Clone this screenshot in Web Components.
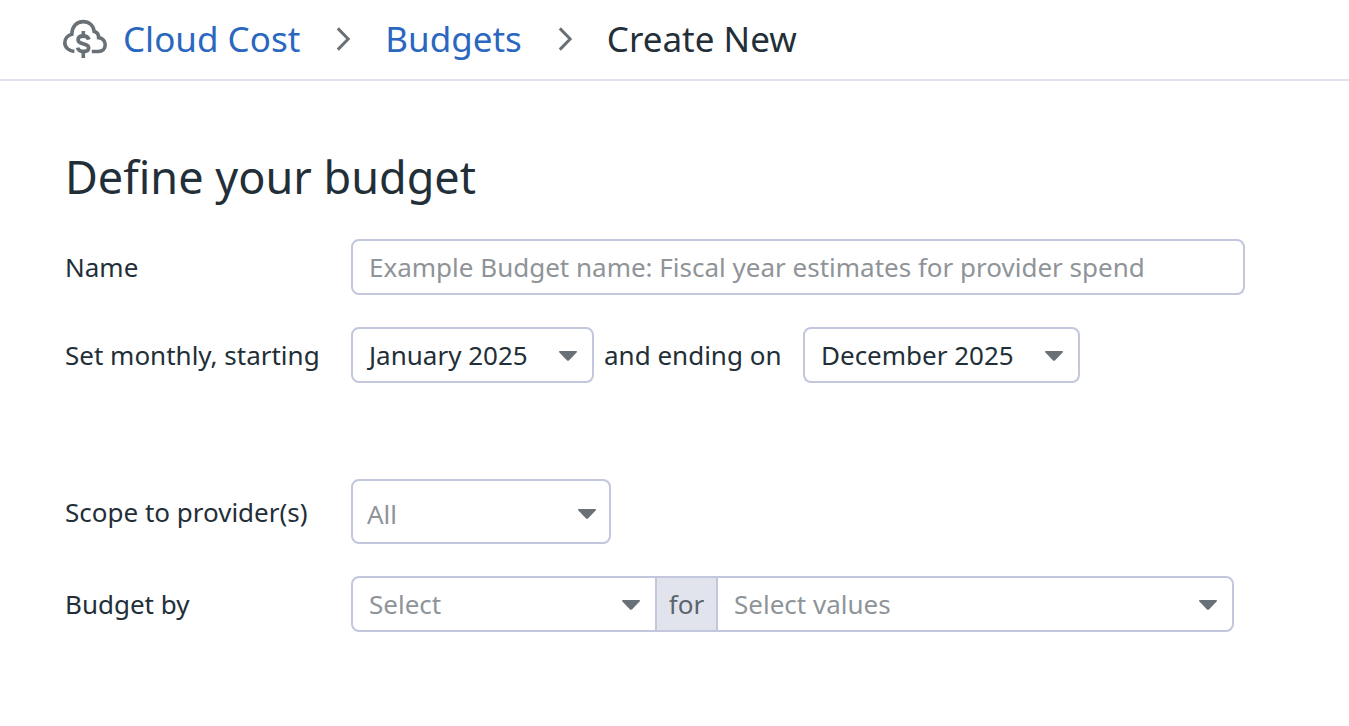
<!DOCTYPE html>
<html lang="en">
<head>
<meta charset="utf-8">
<meta name="viewport" content="width=device-width, initial-scale=1">
<title>Create New Budget</title>
<style>
  body {
    margin: 0;
    background: #fff;
    color: #232f38;
    font: 26px/36px "Noto Sans", "Open Sans", sans-serif;
  }
</style>
</head>
<body>
<budget-page></budget-page>

<script>
  const define = (name, html, setup) => {
    const template = document.createElement('template');
    template.innerHTML = html;
    customElements.define(name, class extends HTMLElement {
      constructor() {
        super();
        this.attachShadow({ mode: 'open' }).append(template.content.cloneNode(true));
      }
      connectedCallback() {
        if (setup) setup(this, this.shadowRoot);
      }
    });
  };

  define('cloud-cost-icon', `
    <style>
      :host { display: block; width: 44px; height: 40px; }
      svg { display: block; }
    </style>
    <svg width="44" height="40" viewBox="0 0 44 40" fill="none" stroke="#697177" stroke-width="3.6" aria-hidden="true">
      <path d="M11.4 32.5C6 32 1.8 28.6 1.8 23.8C1.8 19.6 4.6 16.2 8.8 15.2C9 7.6 13.6 2.6 20.2 2.6C26 2.6 30.6 6.4 31.2 12.6C34 13.2 35.6 15.2 35.6 18.6C39.6 19.2 42.2 22 42.2 25.8C42.2 29.8 39.4 32.5 35.4 32.5H28.8"/>
      <path d="M20.3 12V17.4M20.3 31.5V39"/>
      <path stroke-width="3.8" d="M25.9 20.6C25.1 18.2 23.1 17 20.3 17C17.1 17 15.1 18.5 15.1 20.8C15.1 23.2 17 24.1 20.4 24.8C23.8 25.5 25.6 26.4 25.6 28.9C25.6 31.2 23.6 32.4 20.5 32.4C17.3 32.4 15.2 31 14.6 28.6"/>
    </svg>`);

  define('crumb-chevron', `
    <style>
      :host { display: block; width: 14px; height: 24px; }
      svg { display: block; }
    </style>
    <svg width="14" height="24" viewBox="0 0 14 24" fill="none" stroke="#697177" stroke-width="3" aria-hidden="true">
      <path d="M1.8 1.4L12.2 12L1.8 22.6"/>
    </svg>`);

  define('crumb-bar', `
    <style>
      :host { display: block; border-bottom: 2px solid #e1e3ec; }
      nav {
        display: flex;
        align-items: center;
        padding: 15px 63px 16px;
        font-size: 35px;
        line-height: 48px;
      }
      cloud-cost-icon { margin-right: 16px; }
      crumb-chevron { margin: 0 35px 0 36px; }
      a { color: #2b67bf; text-decoration: none; }
    </style>
    <nav aria-label="Breadcrumb">
      <cloud-cost-icon></cloud-cost-icon>
      <a href="#cloud-cost">Cloud Cost</a>
      <crumb-chevron></crumb-chevron>
      <a href="#budgets">Budgets</a>
      <crumb-chevron></crumb-chevron>
      <span aria-current="page">Create New</span>
    </nav>`);

  define('text-field', `
    <style>
      :host { display: flex; align-items: center; }
      label { flex: none; width: var(--label-width); }
      input {
        flex: 1;
        min-width: 0;
        height: 56px;
        box-sizing: border-box;
        border: 2px solid #c3c7de;
        border-radius: 8px;
        padding: 0 16px;
        background: #fff;
        color: inherit;
        font: inherit;
      }
      input::placeholder { color: #8f9499; opacity: 1; }
    </style>
    <label for="control"></label>
    <input id="control" type="text">`, (host, root) => {
      root.querySelector('label').textContent = host.getAttribute('label');
      root.querySelector('input').placeholder = host.getAttribute('placeholder');
    });

  define('select-field', `
    <style>
      :host { display: flex; align-items: center; }
      label { flex: none; box-sizing: border-box; width: var(--label-width); }
      .box { display: grid; width: var(--box-width); align-items: center; min-width: 0; }
      select, svg { grid-area: 1 / 1; }
      select {
        appearance: none;
        width: 100%;
        height: var(--box-height, 56px);
        box-sizing: border-box;
        margin: 0;
        border: 2px solid #c3c7de;
        border-radius: var(--box-radius, 8px);
        padding: var(--box-padding, 0 40px 0 8px);
        background: #fff;
        color: inherit;
        font: inherit;
        text-indent: 8px;
      }
      :host([empty]) select { color: #8f9499; }
      svg { justify-self: end; margin: var(--arrow-margin, 2px 17px 0 0); pointer-events: none; }
      :host([joined="start"]) { --box-radius: 8px 0 0 8px; }
      :host([joined="end"]) { --box-radius: 0 8px 8px 0; }
      :host([joined="end"]) label {
        height: 56px;
        border: solid #c3c7de;
        border-width: 2px 0;
        background: #e1e4ed;
        color: #5b656d;
        line-height: 52px;
        text-align: center;
      }
    </style>
    <label for="control"></label>
    <span class="box">
      <select id="control"></select>
      <svg width="18" height="10" viewBox="0 0 18 10" aria-hidden="true">
        <path d="M0.6 0H17.4Q18.4 0.6 17.6 1.5L10.2 9.2Q9 10.4 7.8 9.2L0.4 1.5Q-0.4 0.6 0.6 0Z" fill="#697177"/>
      </svg>
    </span>`, (host, root) => {
      root.querySelector('label').textContent = host.getAttribute('label');
      root.querySelector('select').replaceChildren(new Option(host.getAttribute('value')));
    });

  define('budget-page', `
    <style>
      :host { display: block; }
      main { padding: 64px 104px 64px 65px; }
      h1 { margin: 0 0 30px; font-size: 45px; line-height: 64px; font-weight: 400; }
      form { display: grid; gap: 32px; --label-width: 286px; }
      .row { display: flex; align-items: center; }
      .start { --box-width: 243px; }
      .end { --label-width: 199px; --box-width: 277px; margin-left: 10px; }
      .provider { --box-width: 260px; --box-height: 65px; --box-padding: 4px 40px 0 6px; --arrow-margin: 4px 15px 0 0; margin-top: 64px; }
      .by { --box-width: 306px; }
      .for { --label-width: 59px; --box-width: 518px; }
    </style>
    <crumb-bar></crumb-bar>
    <main>
      <h1>Define your budget</h1>
      <form>
        <text-field label="Name" placeholder="Example Budget name: Fiscal year estimates for provider spend"></text-field>
        <div class="row">
          <select-field class="start" label="Set monthly, starting" value="January 2025"></select-field>
          <select-field class="end" label="and ending on" value="December 2025"></select-field>
        </div>
        <select-field class="provider" empty label="Scope to provider(s)" value="All"></select-field>
        <div class="row">
          <select-field class="by" joined="start" empty label="Budget by" value="Select"></select-field>
          <select-field class="for" joined="end" empty label="for" value="Select values"></select-field>
        </div>
      </form>
    </main>`);
</script>
</body>
</html>
